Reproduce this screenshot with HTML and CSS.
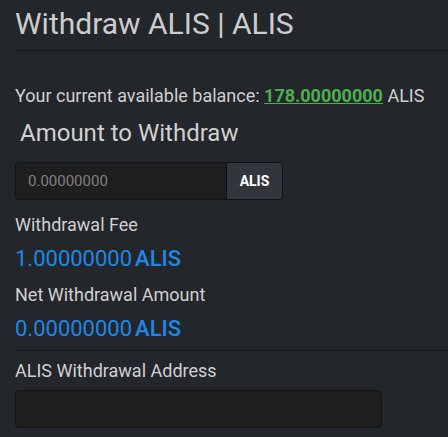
FILE: index.html
```html
<!DOCTYPE html>
<html>
<head>
<meta charset="utf-8">
<link rel="stylesheet" href="styles.css">
</head>
<body>
<div class="page">
  <h1 class="title">Withdraw ALIS | ALIS</h1>
  <div class="rule"></div>
  <p class="balance">Your current available balance: <a class="bal-num">178.00000000</a> ALIS</p>
  <h2 class="amount-title">Amount to Withdraw</h2>
  <div class="input-group">
    <input class="amount-input" type="text" placeholder="0.00000000">
    <span class="addon">ALIS</span>
  </div>
  <div class="label fee-label">Withdrawal Fee</div>
  <div class="value value1">1.00000000<span class="unit">ALIS</span></div>
  <div class="label net-label">Net Withdrawal Amount</div>
  <div class="value value2">0.00000000<span class="unit">ALIS</span></div>
  <div class="rule rule2"></div>
  <div class="label addr-label">ALIS Withdrawal Address</div>
  <input class="addr-input" type="text">
</div>
</body>
</html>
```
FILE: styles.css
```css
html, body {
  margin: 0;
  padding: 0;
  background: #23262b;
}
body {
  font-family: Roboto, "Liberation Sans", sans-serif;
  color: #cfcfcf;
}
.page {
  padding: 0 0 0 15px;
  display: flex;
  flex-direction: column;
  align-items: flex-start;
}
.title {
  margin: 6px 0 0 0;
  font-size: 30px;
  font-weight: 400;
  line-height: 36px;
  color: #cdcdcd;
}
.rule {
  align-self: stretch;
  height: 1px;
  background: #17191c;
  margin-top: 8px;
}
.balance {
  margin: 34px 0 0 0;
  font-size: 18px;
  line-height: 22px;
  color: #d0d0d0;
}
.bal-num {
  color: #4caf50;
  font-weight: 700;
  text-decoration: underline;
}
.amount-title {
  margin: 12px 0 0 5px;
  font-size: 24px;
  font-weight: 400;
  line-height: 28px;
  color: #d0d0d0;
}
.input-group {
  margin-top: 15px;
  display: flex;
  height: 38px;
  width: 268px;
  border: 1px solid #111214;
  border-radius: 4px;
  box-sizing: border-box;
  overflow: hidden;
}
.amount-input {
  flex: 1;
  min-width: 0;
  background: #1e1e1e;
  border: none;
  border-right: 1px solid #111214;
  padding: 0 12px;
  font-family: Roboto, "Liberation Sans", sans-serif;
  font-size: 15px;
  color: #ccc;
  outline: none;
}
.amount-input::placeholder {
  color: #808080;
}
.addon {
  width: 55px;
  display: flex;
  align-items: center;
  justify-content: center;
  background: #32363c;
  color: #fff;
  font-weight: 700;
  font-size: 14px;
}
.label {
  font-size: 18px;
  font-weight: 400;
  line-height: 22px;
  color: #d0d0d0;
}
.fee-label {
  margin-top: 14px;
}
.net-label {
  margin-top: 12px;
}
.addr-label {
  margin-top: 9px;
}
.value {
  font-size: 22px;
  line-height: 26px;
  color: #1e88e5;
}
.value1 {
  margin-top: 10px;
}
.value2 {
  margin-top: 10px;
}
.unit {
  margin-left: 3px;
  font-weight: 500;
}
.rule2 {
  margin-top: 8px;
}
.addr-input {
  margin-top: 8px;
  width: 367px;
  height: 38px;
  box-sizing: border-box;
  background: #1e1e1e;
  border: 1px solid #111214;
  border-radius: 4px;
  outline: none;
}
```
